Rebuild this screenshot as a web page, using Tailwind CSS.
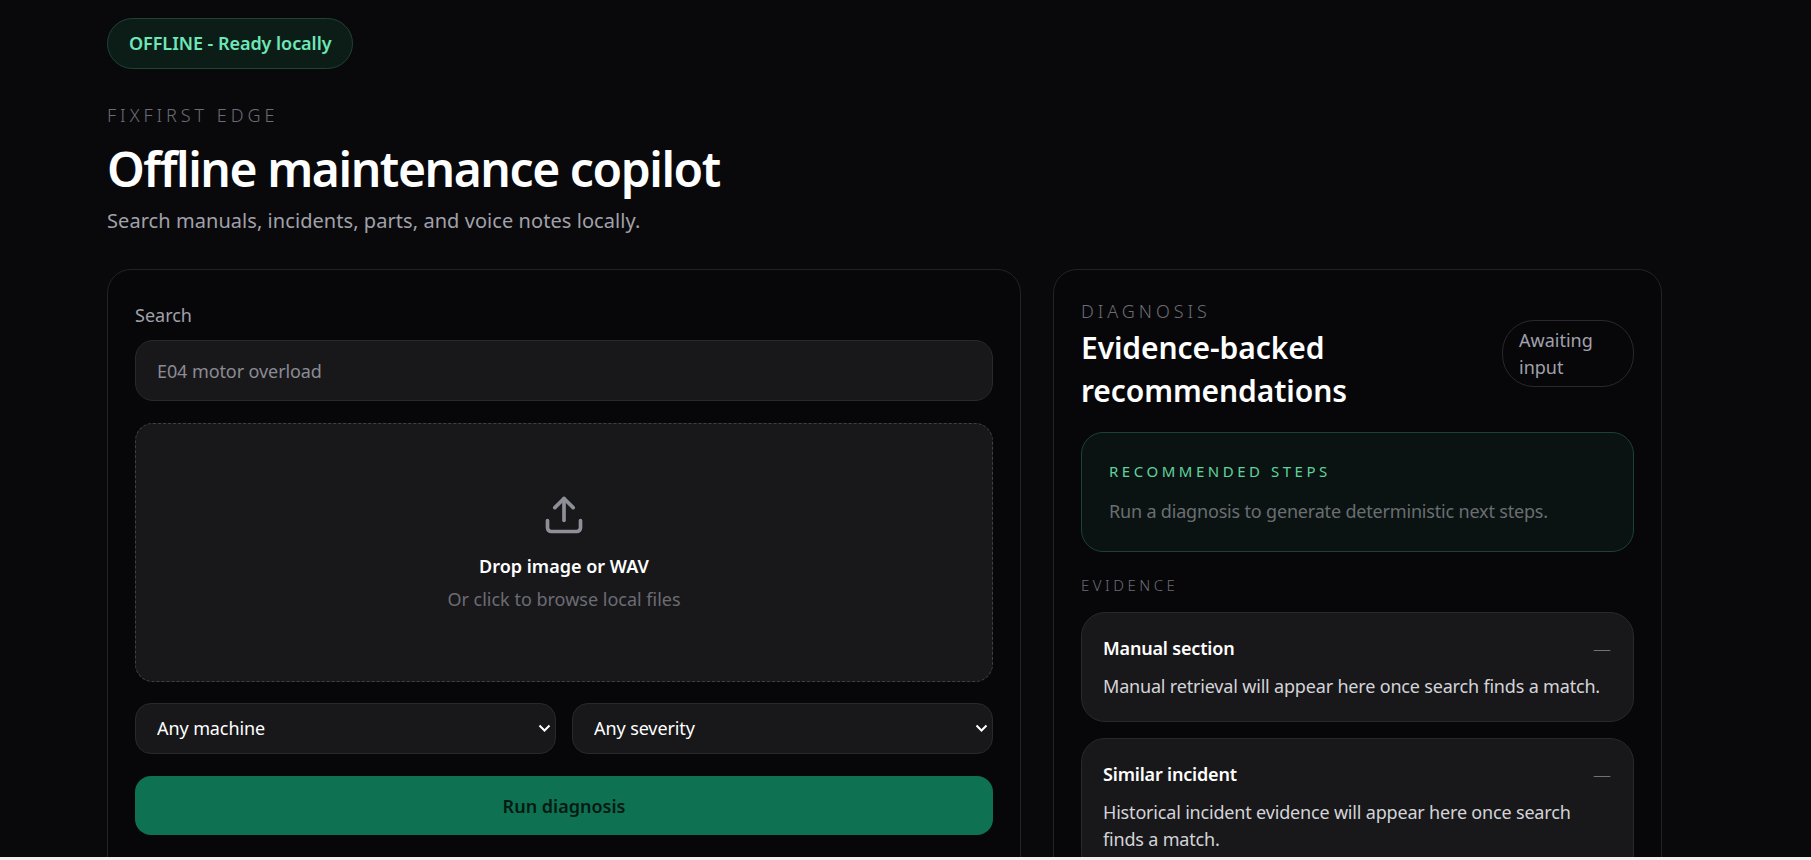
<!DOCTYPE html>
<html lang="en">
<head>
  <meta charset="UTF-8">
  <meta name="viewport" content="width=device-width, initial-scale=1.0">
  <title>FixFirst Edge</title>
  <script src="https://cdn.jsdelivr.net/npm/@tailwindcss/browser@4"></script>
</head>
<body class="h-[860px] overflow-hidden bg-[#f1f1f1] font-['Noto_Sans',sans-serif] text-white">
  <div class="h-[857px] overflow-hidden bg-[#09090c] pl-[107px] pr-[149px] pt-[18px]">
    <!-- Header -->
    <div class="inline-flex h-[51px] items-center rounded-full border border-[#1d4436] bg-[#0c1d18] px-[21px] text-[18px] font-semibold tracking-[-0.003em] text-[#6ee7b7]">OFFLINE - Ready locally</div>
    <p class="mt-[33px] text-[18px] leading-[27px] font-light tracking-[0.22em] text-[#6c6c74]">FIXFIRST EDGE</p>
    <h1 class="mt-[10px] text-[48px] leading-[60px] font-semibold tracking-[-0.03em]">Offline maintenance copilot</h1>
    <p class="mt-[7px] text-[20px] leading-[30px] tracking-[0.003em] text-[#a1a1aa]">Search manuals, incidents, parts, and voice notes locally.</p>

    <div class="mt-[33px] grid grid-cols-[914px_609px] gap-[32px]">
      <!-- Left panel -->
      <div class="h-[640px] rounded-t-[24px] border border-[#232327] bg-[#07070a] px-[27px] pt-[32px]">
        <label class="block text-[18px] leading-[27px] text-[#a1a1aa]">Search</label>
        <input class="mt-[11px] block h-[61px] w-full rounded-[18px] border border-[#29292d] bg-[#18181b] px-[21px] text-[18px] tracking-[-0.005em] text-white placeholder:text-[#8b8b94]" placeholder="E04 motor overload">
        <div class="mt-[22px] flex h-[259px] flex-col items-center justify-center rounded-[18px] border border-dashed border-[#3f3f46] bg-[#18181b]">
          <svg class="h-[44px] w-[44px] text-[#8f8f98]" viewBox="0 0 24 24" fill="none" stroke="currentColor" stroke-width="2" stroke-linecap="round" stroke-linejoin="round"><path d="M21 15v4a2 2 0 0 1-2 2H5a2 2 0 0 1-2-2v-4"/><polyline points="17 8 12 3 7 8"/><line x1="12" y1="3" x2="12" y2="15"/></svg>
          <p class="mt-[16px] text-[18px] leading-[27px] font-semibold">Drop image or WAV</p>
          <p class="mt-[6px] text-[18px] leading-[27px] text-[#6c6c74]">Or click to browse local files</p>
        </div>
        <div class="mt-[21px] grid grid-cols-2 gap-[16px]">
          <div class="relative">
            <select class="h-[51px] w-full appearance-none rounded-[16px] border border-[#29292d] bg-[#18181b] px-[21px] text-[18px] tracking-[-0.005em] text-white"><option>Any machine</option></select>
            <svg class="pointer-events-none absolute top-[21px] right-[5px] h-[9px] w-[13px] text-white" viewBox="0 0 13 9" fill="none" stroke="currentColor" stroke-width="2"><path d="M1.5 1.5 6.5 6.5 11.5 1.5"/></svg>
          </div>
          <div class="relative">
            <select class="h-[51px] w-full appearance-none rounded-[16px] border border-[#29292d] bg-[#18181b] px-[21px] text-[18px] tracking-[-0.005em] text-white"><option>Any severity</option></select>
            <svg class="pointer-events-none absolute top-[21px] right-[5px] h-[9px] w-[13px] text-white" viewBox="0 0 13 9" fill="none" stroke="currentColor" stroke-width="2"><path d="M1.5 1.5 6.5 6.5 11.5 1.5"/></svg>
          </div>
        </div>
        <button class="mt-[22px] h-[59px] w-full rounded-[16px] bg-[#0e7252] pt-[2px] text-[18px] font-semibold text-[#041a12]">Run diagnosis</button>
      </div>

      <!-- Right panel -->
      <div class="h-[640px] rounded-t-[24px] border border-[#232327] bg-[#07070a] px-[27px] pt-[31px]">
        <div class="flex items-start justify-between">
          <div>
            <p class="text-[18px] leading-[20px] font-light tracking-[0.22em] text-[#6c6c74]">DIAGNOSIS</p>
            <h2 class="mt-[5px] w-[320px] text-[30px] leading-[43px] font-semibold tracking-[-0.003em]">Evidence-backed recommendations</h2>
          </div>
          <div class="mt-[19px] w-[132px] rounded-[32px] border border-[#29292d] pt-[6px] pr-[16px] pb-[5px] pl-[16px] text-[18px] leading-[27px] text-[#a1a1aa]">Awaiting input</div>
        </div>
        <div class="mt-[20px] h-[120px] rounded-[22px] border border-[#1a4235] bg-[#0a1311] px-[27px] pt-[27px]">
          <p class="text-[15px] leading-[22px] tracking-[0.235em] text-[#5fd39e]">RECOMMENDED STEPS</p>
          <p class="mt-[16px] text-[18px] leading-[27px] tracking-[-0.01em] text-[#6a6e72]">Run a diagnosis to generate deterministic next steps.</p>
        </div>
        <p class="mt-[23px] text-[15px] leading-[21px] font-light tracking-[0.235em] text-[#6c6c74]">EVIDENCE</p>
        <div class="mt-[16px] h-[110px] rounded-[24px] border border-[#29292d] bg-[#18181b] pt-[22px] pr-[22px] pl-[21px]">
          <div class="flex justify-between"><span class="text-[18px] leading-[27px] font-semibold tracking-[-0.01em]">Manual section</span><span class="text-[18px] leading-[27px] font-light text-[#71717a]">—</span></div>
          <p class="mt-[11px] text-[18px] leading-[27px] tracking-[-0.01em] text-[#d4d4d8]">Manual retrieval will appear here once search finds a match.</p>
        </div>
        <div class="mt-[16px] h-[140px] rounded-[24px] border border-[#29292d] bg-[#18181b] pt-[22px] pr-[22px] pl-[21px]">
          <div class="flex justify-between"><span class="text-[18px] leading-[27px] font-semibold tracking-[-0.01em]">Similar incident</span><span class="text-[18px] leading-[27px] font-light text-[#71717a]">—</span></div>
          <p class="mt-[11px] text-[18px] leading-[27px] tracking-[-0.01em] text-[#d4d4d8]">Historical incident evidence will appear here once search finds a match.</p>
        </div>
      </div>
    </div>
  </div>
</body>
</html>
